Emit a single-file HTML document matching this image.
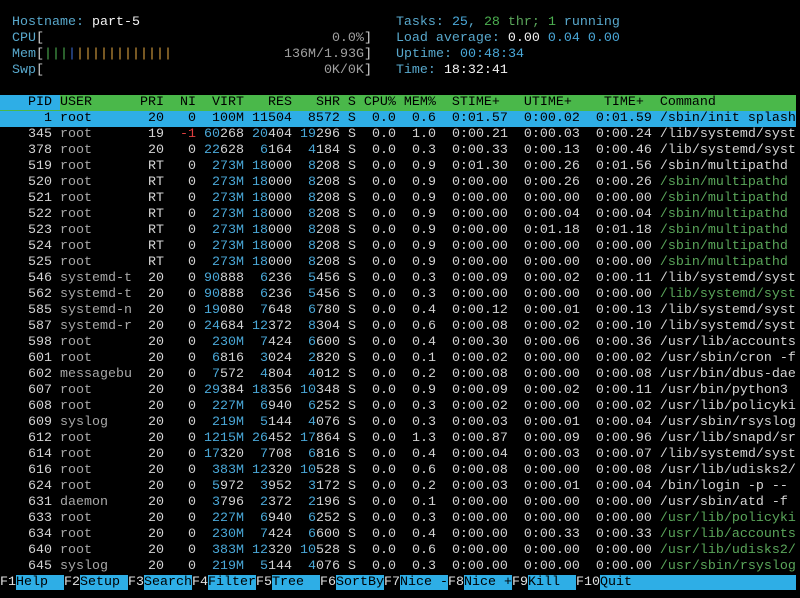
<!DOCTYPE html>
<html><head><meta charset="utf-8"><style>
html,body{margin:0;padding:0;background:#000;width:800px;height:598px;overflow:hidden}
.l{position:absolute;left:0;height:16px;line-height:16px;white-space:pre;font-family:"Liberation Mono",monospace;font-size:13.33px;color:#d4d4d4;padding-left:4px;width:792px;overflow:hidden}
.u{color:#a8a8a8}.c{color:#4aa8d8}.g{color:#5aa65a}.r{color:#e04040}.w{color:#f4f4f4}
.lb{color:#58a8cc}.gb{color:#4caf50}.bb{color:#3a6ad0}.yb{color:#d8a040}.dim{color:#a0a0a0}
.sel{background:#2eaee6;color:#000}
.sel span{color:#000}
.hd{background:#4ab84a;color:#000}
.hp{background:#2eaee6}
.f{position:absolute;left:0;top:575px;height:16px;line-height:16px;white-space:pre;font-family:"Liberation Mono",monospace;font-size:13.33px;color:#e0e0e0;width:796px;overflow:hidden}
.f b{font-weight:normal;background:#2eaee6;color:#000}
</style></head><body>
<div class="l" style="top:15px"> <span class="lb">Hostname: </span><span class="w">part-5</span>                                <span class="lb">Tasks: </span><span class="c">25</span><span class="lb">, </span><span class="gb">28</span><span class="g"> thr; </span><span class="gb">1</span><span class="lb"> running</span></div>
<div class="l" style="top:31px"> <span class="lb">CPU</span>[                                    <span class="dim">0.0%</span>]   <span class="lb">Load average: </span><span class="w">0.00 </span><span class="c">0.04 </span><span class="c">0.00</span></div>
<div class="l" style="top:47px"> <span class="lb">Mem</span>[<span class="gb">|||</span><span class="bb">|</span><span class="yb">||||||||||||</span>              <span class="dim">136M/1.93G</span>]   <span class="lb">Uptime: </span><span class="c">00:48:34</span></div>
<div class="l" style="top:63px"> <span class="lb">Swp</span>[                                   <span class="dim">0K/0K</span>]   <span class="lb">Time: </span><span class="w">18:32:41</span></div>
<div class="l" style="top:95px;padding-left:0;width:796px;background:#4ab84a;color:#000"><span class="hp" style="padding-left:4px">   PID </span>USER      PRI  NI  VIRT   RES   SHR S CPU% MEM%  STIME+   UTIME+    TIME+  Command</div>
<div class="l sel" style="top:111px;width:792px">     1 root       20   0  100M 11504  8572 S  0.0  0.6  0:01.57  0:00.02  0:01.59 /sbin/init splash</div>
<div class="l" style="top:127px">   345 <span class="u">root     </span>  19  <span class="r">-1</span> <span class="c">60</span>268 <span class="c">20</span>404 <span class="c">19</span>296 S  0.0  1.0  0:00.21  0:00.03  0:00.24 /lib/systemd/syst</div>
<div class="l" style="top:143px">   378 <span class="u">root     </span>  20   0 <span class="c">22</span>628  <span class="c">6</span>164  <span class="c">4</span>184 S  0.0  0.3  0:00.33  0:00.13  0:00.46 /lib/systemd/syst</div>
<div class="l" style="top:159px">   519 <span class="u">root     </span>  RT   0  <span class="c">273M</span> <span class="c">18</span>000  <span class="c">8</span>208 S  0.0  0.9  0:01.30  0:00.26  0:01.56 /sbin/multipathd</div>
<div class="l" style="top:175px">   520 <span class="u">root     </span>  RT   0  <span class="c">273M</span> <span class="c">18</span>000  <span class="c">8</span>208 S  0.0  0.9  0:00.00  0:00.26  0:00.26 <span class="g">/sbin/multipathd</span></div>
<div class="l" style="top:191px">   521 <span class="u">root     </span>  RT   0  <span class="c">273M</span> <span class="c">18</span>000  <span class="c">8</span>208 S  0.0  0.9  0:00.00  0:00.00  0:00.00 <span class="g">/sbin/multipathd</span></div>
<div class="l" style="top:207px">   522 <span class="u">root     </span>  RT   0  <span class="c">273M</span> <span class="c">18</span>000  <span class="c">8</span>208 S  0.0  0.9  0:00.00  0:00.04  0:00.04 <span class="g">/sbin/multipathd</span></div>
<div class="l" style="top:223px">   523 <span class="u">root     </span>  RT   0  <span class="c">273M</span> <span class="c">18</span>000  <span class="c">8</span>208 S  0.0  0.9  0:00.00  0:01.18  0:01.18 <span class="g">/sbin/multipathd</span></div>
<div class="l" style="top:239px">   524 <span class="u">root     </span>  RT   0  <span class="c">273M</span> <span class="c">18</span>000  <span class="c">8</span>208 S  0.0  0.9  0:00.00  0:00.00  0:00.00 <span class="g">/sbin/multipathd</span></div>
<div class="l" style="top:255px">   525 <span class="u">root     </span>  RT   0  <span class="c">273M</span> <span class="c">18</span>000  <span class="c">8</span>208 S  0.0  0.9  0:00.00  0:00.00  0:00.00 <span class="g">/sbin/multipathd</span></div>
<div class="l" style="top:271px">   546 <span class="u">systemd-t</span>  20   0 <span class="c">90</span>888  <span class="c">6</span>236  <span class="c">5</span>456 S  0.0  0.3  0:00.09  0:00.02  0:00.11 /lib/systemd/syst</div>
<div class="l" style="top:287px">   562 <span class="u">systemd-t</span>  20   0 <span class="c">90</span>888  <span class="c">6</span>236  <span class="c">5</span>456 S  0.0  0.3  0:00.00  0:00.00  0:00.00 <span class="g">/lib/systemd/syst</span></div>
<div class="l" style="top:303px">   585 <span class="u">systemd-n</span>  20   0 <span class="c">19</span>080  <span class="c">7</span>648  <span class="c">6</span>780 S  0.0  0.4  0:00.12  0:00.01  0:00.13 /lib/systemd/syst</div>
<div class="l" style="top:319px">   587 <span class="u">systemd-r</span>  20   0 <span class="c">24</span>684 <span class="c">12</span>372  <span class="c">8</span>304 S  0.0  0.6  0:00.08  0:00.02  0:00.10 /lib/systemd/systd</div>
<div class="l" style="top:335px">   598 <span class="u">root     </span>  20   0  <span class="c">230M</span>  <span class="c">7</span>424  <span class="c">6</span>600 S  0.0  0.4  0:00.30  0:00.06  0:00.36 /usr/lib/accounts</div>
<div class="l" style="top:351px">   601 <span class="u">root     </span>  20   0  <span class="c">6</span>816  <span class="c">3</span>024  <span class="c">2</span>820 S  0.0  0.1  0:00.02  0:00.00  0:00.02 /usr/sbin/cron -f</div>
<div class="l" style="top:367px">   602 <span class="u">messagebu</span>  20   0  <span class="c">7</span>572  <span class="c">4</span>804  <span class="c">4</span>012 S  0.0  0.2  0:00.08  0:00.00  0:00.08 /usr/bin/dbus-dae</div>
<div class="l" style="top:383px">   607 <span class="u">root     </span>  20   0 <span class="c">29</span>384 <span class="c">18</span>356 <span class="c">10</span>348 S  0.0  0.9  0:00.09  0:00.02  0:00.11 /usr/bin/python3 </div>
<div class="l" style="top:399px">   608 <span class="u">root     </span>  20   0  <span class="c">227M</span>  <span class="c">6</span>940  <span class="c">6</span>252 S  0.0  0.3  0:00.02  0:00.00  0:00.02 /usr/lib/policyki</div>
<div class="l" style="top:415px">   609 <span class="u">syslog   </span>  20   0  <span class="c">219M</span>  <span class="c">5</span>144  <span class="c">4</span>076 S  0.0  0.3  0:00.03  0:00.01  0:00.04 /usr/sbin/rsyslog</div>
<div class="l" style="top:431px">   612 <span class="u">root     </span>  20   0 <span class="c">1215M</span> <span class="c">26</span>452 <span class="c">17</span>864 S  0.0  1.3  0:00.87  0:00.09  0:00.96 /usr/lib/snapd/sr</div>
<div class="l" style="top:447px">   614 <span class="u">root     </span>  20   0 <span class="c">17</span>320  <span class="c">7</span>708  <span class="c">6</span>816 S  0.0  0.4  0:00.04  0:00.03  0:00.07 /lib/systemd/syst</div>
<div class="l" style="top:463px">   616 <span class="u">root     </span>  20   0  <span class="c">383M</span> <span class="c">12</span>320 <span class="c">10</span>528 S  0.0  0.6  0:00.08  0:00.00  0:00.08 /usr/lib/udisks2/</div>
<div class="l" style="top:479px">   624 <span class="u">root     </span>  20   0  <span class="c">5</span>972  <span class="c">3</span>952  <span class="c">3</span>172 S  0.0  0.2  0:00.03  0:00.01  0:00.04 /bin/login -p --</div>
<div class="l" style="top:495px">   631 <span class="u">daemon   </span>  20   0  <span class="c">3</span>796  <span class="c">2</span>372  <span class="c">2</span>196 S  0.0  0.1  0:00.00  0:00.00  0:00.00 /usr/sbin/atd -f</div>
<div class="l" style="top:511px">   633 <span class="u">root     </span>  20   0  <span class="c">227M</span>  <span class="c">6</span>940  <span class="c">6</span>252 S  0.0  0.3  0:00.00  0:00.00  0:00.00 <span class="g">/usr/lib/policyki</span></div>
<div class="l" style="top:527px">   634 <span class="u">root     </span>  20   0  <span class="c">230M</span>  <span class="c">7</span>424  <span class="c">6</span>600 S  0.0  0.4  0:00.00  0:00.33  0:00.33 <span class="g">/usr/lib/accounts</span></div>
<div class="l" style="top:543px">   640 <span class="u">root     </span>  20   0  <span class="c">383M</span> <span class="c">12</span>320 <span class="c">10</span>528 S  0.0  0.6  0:00.00  0:00.00  0:00.00 <span class="g">/usr/lib/udisks2/</span></div>
<div class="l" style="top:559px">   645 <span class="u">syslog   </span>  20   0  <span class="c">219M</span>  <span class="c">5</span>144  <span class="c">4</span>076 S  0.0  0.3  0:00.00  0:00.00  0:00.00 <span class="g">/usr/sbin/rsyslog</span></div>
<div class="f">F1<b>Help  </b>F2<b>Setup </b>F3<b>Search</b>F4<b>Filter</b>F5<b>Tree  </b>F6<b>SortBy</b>F7<b>Nice -</b>F8<b>Nice +</b>F9<b>Kill  </b>F10<b>Quit                                                                                    </b></div>
</body></html>
